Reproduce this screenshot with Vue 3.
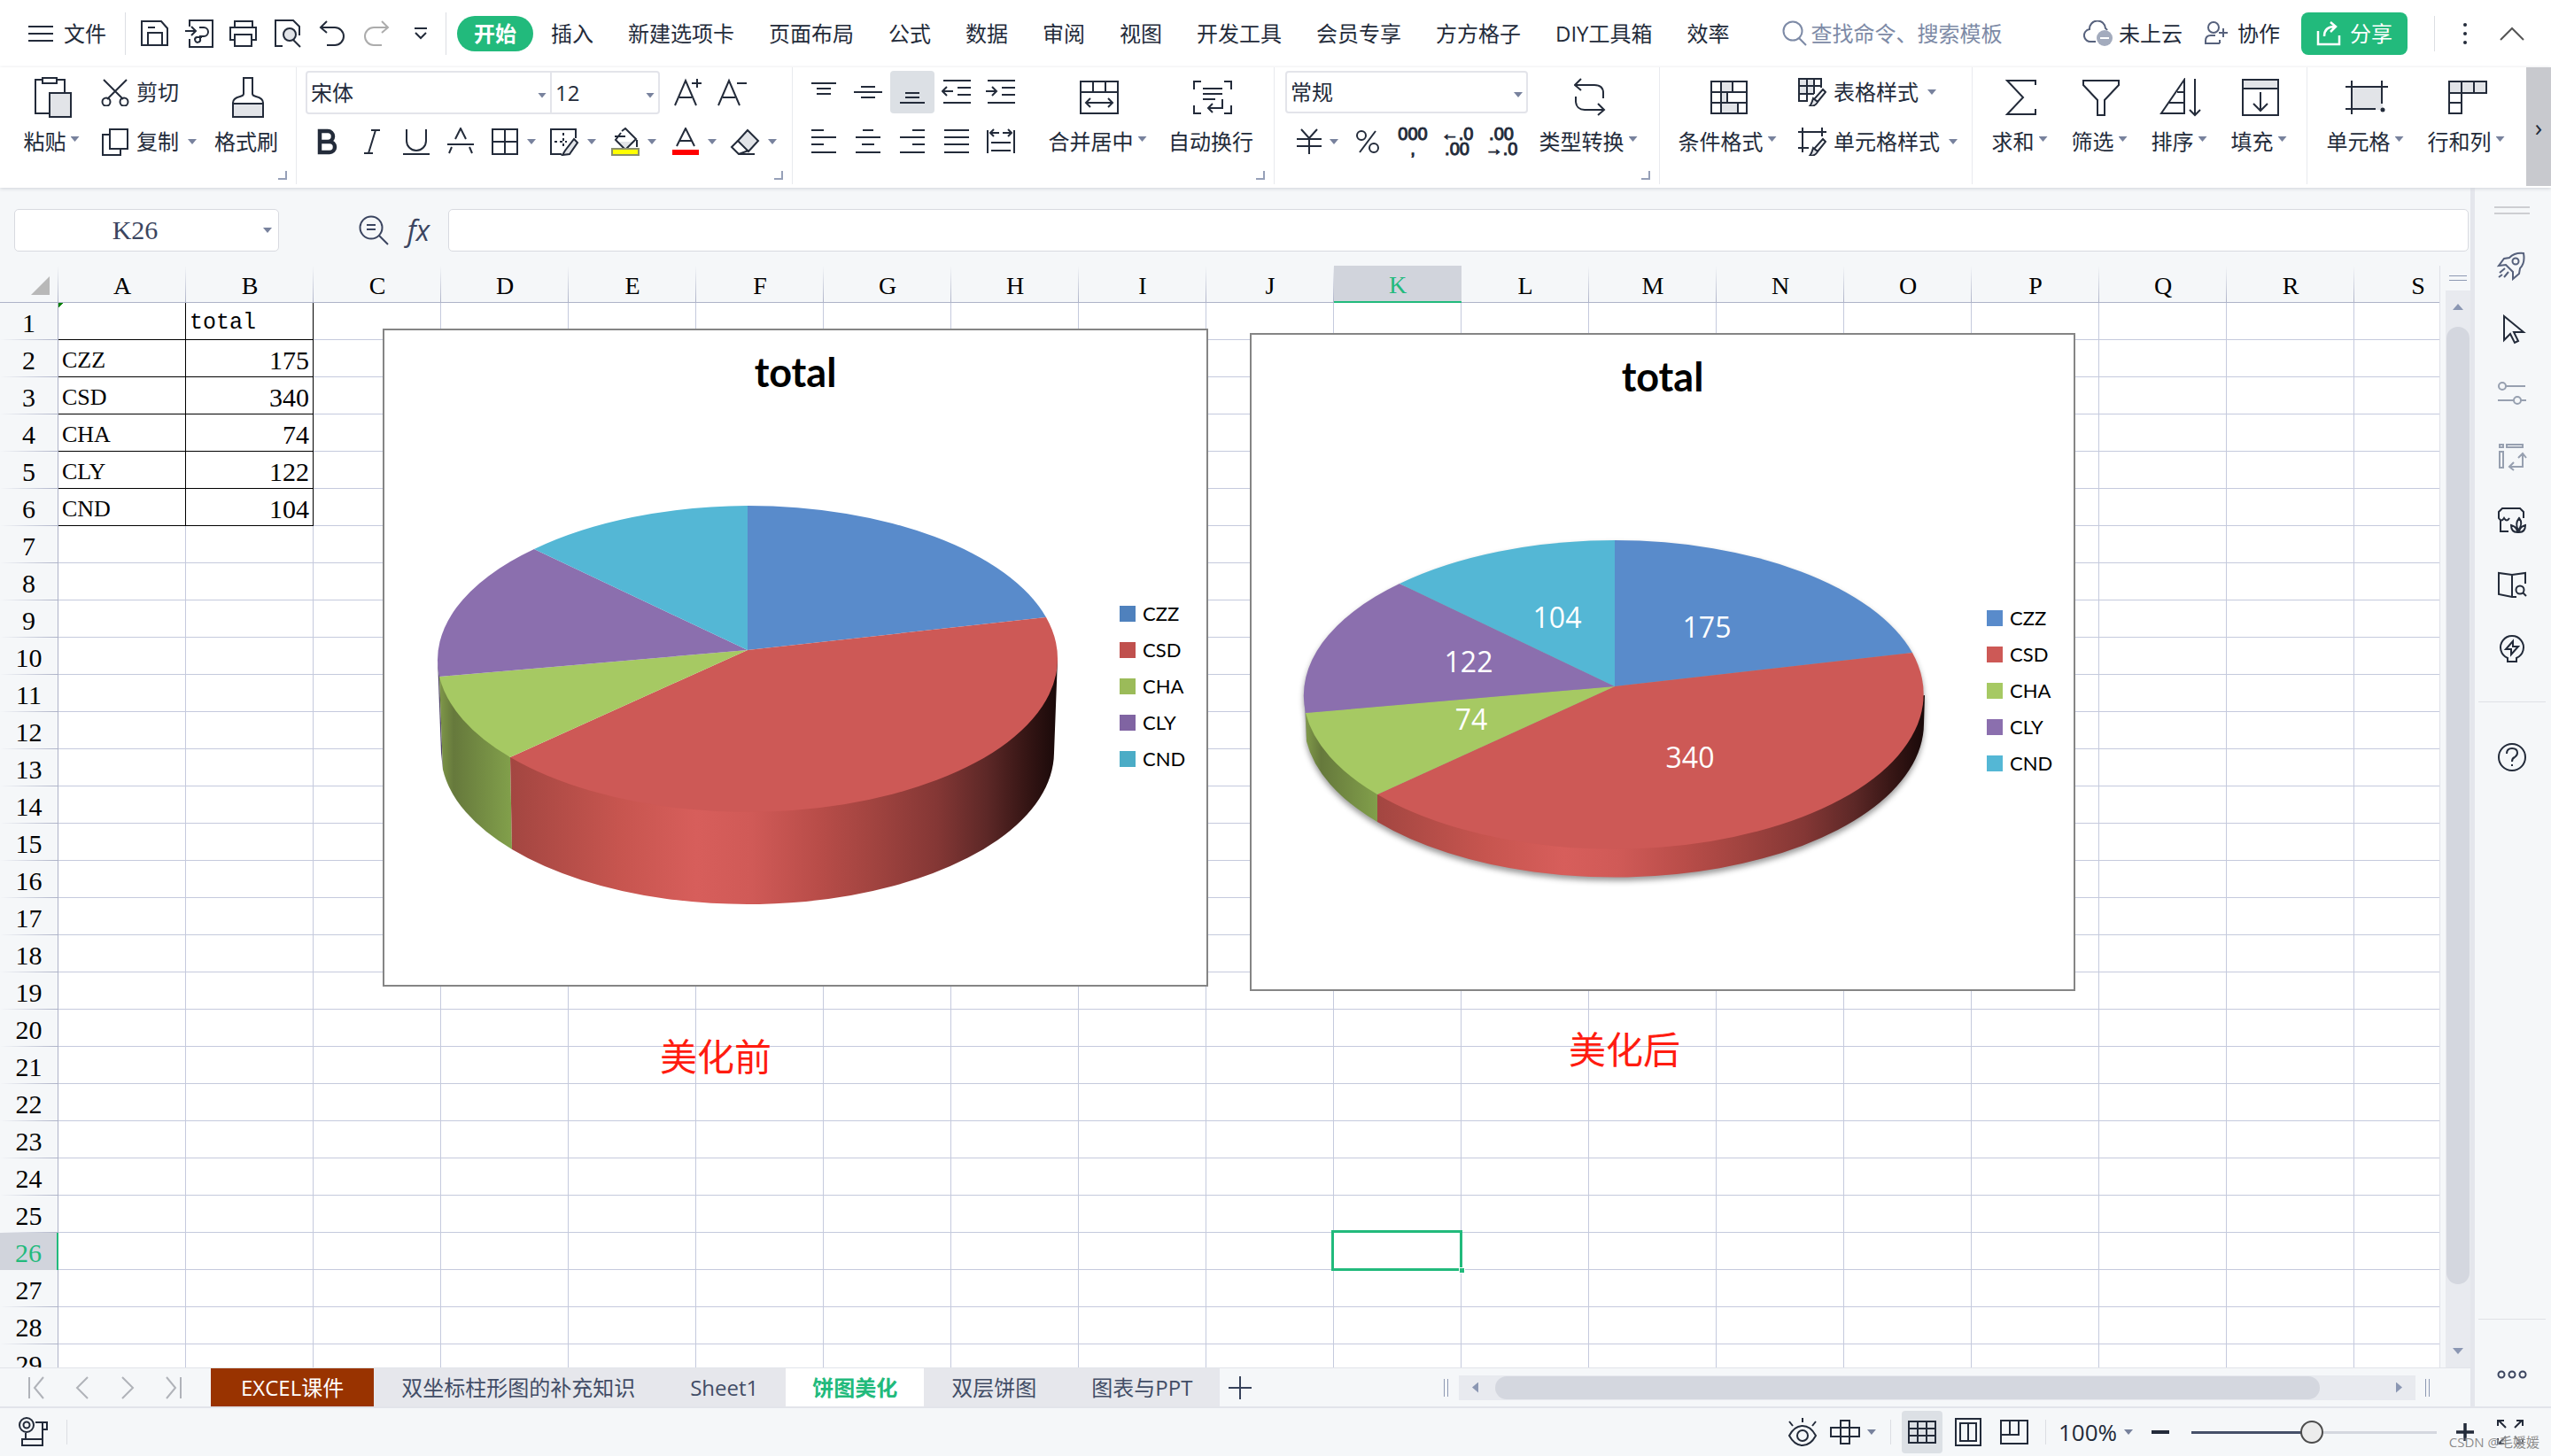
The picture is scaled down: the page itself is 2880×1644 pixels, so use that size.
<script setup>
import { h } from 'vue'

const G = 'fill="#e2e4e8"'

// name: [width, height, markup]
const icons = {
  menu: [28, 20, '<path d="M0 2h28M0 10h28M0 18h28"/>'],
  save: [32, 30, '<path d="M1 1h22l7 8v19H1z"/><path d="M8 28V14h16v14M8 8h8"/>'],
  exportPdf: [32, 32, '<path d="M5 8V1h26v30H5v-9"/><path d="M0 13h11M7 8l5 5-5 5"/><path d="M16 9h5a5 5 0 0 1 0 10h-4v3a3 3 0 1 1-4-2h6"/>'],
  print: [32, 30, '<path d="M6 8V1h20v7"/><path d="M5 22H1V8h29v14h-4"/><path d="M6 16h19v13H6z"/>'],
  preview: [30, 32, `<path d="M9 30H1V1h20l7 7v10"/><circle cx="17" cy="17" r="7" ${G}/><path d="M21 23l8 8"/>`],
  undo: [30, 30, '<path d="M9 1L2 8l7 6"/><path d="M2 8h16a10 10 0 0 1 0 20H9"/>'],
  redo: [30, 30, '<path d="M21 1l7 7-7 6"/><path d="M28 8H12a10 10 0 0 0 0 20h9"/>'],
  more: [16, 16, '<path d="M1 2h14"/><path d="M2 7l6 6 6-6"/>'],
  search: [30, 30, '<circle cx="12" cy="12" r="10.500"/><path d="M19 20l8 8"/>'],
  cloud: [34, 30, '<path d="M14 24H9a7 7 0 0 1-2-14 9 9 0 0 1 18-1 7 7 0 0 1 2 2"/><circle cx="24" cy="20" r="9" fill="#a3abbd" stroke="none"/><path d="M19 20h10" stroke="#fff"/>'],
  user: [28, 28, '<circle cx="11" cy="7" r="6"/><path d="M18 25H2v-3q0-6 6-6h5M22 8v10M17 13h10M18 25v-4"/>'],
  share: [28, 28, '<path d="M2 11v15h24V16" stroke-width="2.500"/><path d="M9 17q0-11 12-11M16 1l6 5-6 6" stroke-width="2.500"/>'],
  dots: [6, 26, '<g fill="currentColor" stroke="none"><circle cx="3" cy="3" r="2"/><circle cx="3" cy="13" r="2"/><circle cx="3" cy="23" r="2"/></g>'],
  up: [28, 16, '<path d="M1 15L14 2l13 13"/>'],
  paste: [44, 48, `<path d="M10 4H2v38h17M27 4h8v14"/><path d="M10 2h16v6H10z"/><path d="M18 19h24v27H18z" ${G}/>`],
  cut: [32, 32, '<path d="M3 2l22 22M29 2L7 24"/><circle cx="6" cy="27" r="4.500"/><circle cx="26" cy="27" r="4.500"/>'],
  copy: [32, 32, '<path d="M10 2h20v22H10z"/><path d="M9 8H2v23h20v-6"/>'],
  brush: [38, 48, `<path d="M14 2h10v18q0 2 4 3 8 2 8 7v16H2V30q0-5 8-7 4-1 4-3z"/><path d="M2 31h34v15H2z" ${G}/>`],
  bigA: [32, 32, '<path d="M1 31L13 3l12 28M6 22h14M20 6h11M26 1v10"/>'],
  smallA: [34, 32, '<path d="M1 31L13 3l12 28M6 22h14M22 6h11"/>'],
  bold: [24, 30, '<path d="M3 3h9a6 6 0 0 1 0 12H3zM3 15h11a6 6 0 0 1 0 12H3z" stroke-width="4.500"/>'],
  italic: [20, 30, '<path d="M9 2h10M1 28h10M14 2L6 28"/>'],
  underline: [32, 32, '<path d="M5 2v13a11 11 0 0 0 22 0V2M1 30h30"/>'],
  strike: [32, 32, '<path d="M10 13l6-12 6 12M1 19h30M6 22L3 29M26 22l3 7"/>'],
  borders: [32, 32, '<path d="M2 2h28v28H2zM16 2v28M2 16h28"/>'],
  drawBorder: [34, 32, `<path d="M30 8V2H2v28h12M30 8v4"/><path d="M16 6v16M6 16h14" stroke-dasharray="3 3"/><path d="M28 13l4 4-9 13-8 1 3-5z" ${G}/>`],
  fill: [32, 32, `<path d="M5 16h22l-11 9z" ${G} stroke="none"/><path d="M12 4l4-3 12 12-12 12L5 14l6-8M4 10h12M29 14v8"/><path d="M1 24h30v7H1z" fill="#ff0" stroke="#8a8f6a"/>`],
  fontColor: [32, 32, '<path d="M6 21L16 1l10 20M9 15h14"/><path d="M1 25h30v6H1z" fill="#f00" stroke="none"/>'],
  eraser: [34, 32, `<path d="M20 3l12 12-11 12L9 15z" ${G}/><path d="M9 15l-7 7 8 8h18M10 30l11-4"/>`],
  alTop: [30, 32, '<path d="M1 6h28M7 12h16M7 18h16"/>'],
  alMid: [32, 32, '<path d="M8 10h16M0 16h32M8 22h16"/>'],
  alBot: [30, 32, '<path d="M7 17h16M7 22h16M1 28h28"/>'],
  indL: [34, 32, '<path d="M2 3h31M18 11h15M18 19h15M2 28h31M1 15h12M6 10l-5 5 5 5"/>'],
  indR: [34, 32, '<path d="M2 3h31M18 11h15M18 19h15M2 28h31M0 15h12M7 10l5 5-5 5"/>'],
  tL: [30, 30, '<path d="M1 2h14M1 10h28M1 18h14M1 27h28"/>'],
  tC: [30, 30, '<path d="M9 2h12M1 10h28M8 18h14M1 27h28"/>'],
  tR: [30, 30, '<path d="M15 2h14M1 10h28M15 18h14M1 27h28"/>'],
  tJ: [30, 30, '<path d="M1 2h28M1 10h28M1 18h28M1 27h28"/>'],
  tD: [34, 30, '<path d="M2 2v26M32 2v26M6 16h22M6 25h22M5 5h10M19 5h10M9 1L5 5l4 4M25 1l4 4-4 4"/>'],
  merge: [46, 40, '<path d="M2 2h42v36H2zM2 14h42M16 2v12M30 2v12M8 26h30M13 21l-5 5 5 5M33 21l5 5-5 5"/>'],
  wrap: [46, 40, '<path d="M10 2H2v9M36 2h8v9M10 38H2v-9M36 38h8v-9M12 10h22M12 16h22M12 22h14M34 22v10H18M23 27l-5 5 5 5"/>'],
  yen: [28, 30, '<path d="M5 1l9 10 9-10M14 11v18M0 12h28M0 20h28"/>'],
  percent: [26, 30, '<circle cx="6" cy="8" r="5"/><circle cx="20" cy="22" r="5"/><path d="M22 3L4 27"/>'],
  convert: [36, 44, '<path d="M8 1L1 8l7 6M1 8h22q10 0 10 9v6"/><path d="M27 29l7 7-7 6M34 36H12q-9 0-10-9v-6"/>'],
  condFmt: [44, 40, `<path d="M13 2h13v12H13zM13 14h7v12h-7zM13 26h19v12H13z" ${G} stroke="none"/><path d="M2 2h40v36H2zM2 14h40M2 26h40M13 2v36M26 2v12M20 14v12M32 26v12"/>`],
  tblStyle: [32, 32, `<path d="M1 1h17v17H1z" ${G} stroke="none"/><path d="M18 18H10v8H1V1h25v10M1 9h25M1 18h17M10 1v17M18 1v17"/><path d="M28 13l3 3-9 11-4-3z" fill="#fff"/><path d="M17 23l5 4q-2 5-9 5 2-2 4-9z" ${G}/>`],
  cellStyle: [32, 32, `<path d="M5 0v28M0 5h32M27 0v10M0 23h12"/><path d="M28 13l3 3-9 11-4-3z" fill="#fff"/><path d="M17 23l5 4q-2 5-9 5 2-2 4-9z" ${G}/>`],
  sum: [38, 44, '<path d="M35 8V3H3l18 19L3 41h32v-6"/>'],
  filter: [44, 44, '<path d="M2 3h40v5L26 25v17h-8V25L2 8z"/>'],
  sort: [48, 44, '<path d="M28 2v38H2zM20 16h8M11 28h17M40 1v41M34 36l6 6 6-6"/>'],
  fillDown: [44, 44, `<path d="M2 2h40v10H2z" ${G}/><path d="M2 2h40v40H2zM22 16v20M14 29l8 8 8-8"/>`],
  cell: [48, 40, `<path d="M8 8h34v26H8z" ${G} stroke="none"/><path d="M7 1v38M0 8h48M41 1v26M0 33h34"/><circle cx="42" cy="34" r="2.500" fill="currentColor" stroke="none"/>`],
  rowCol: [46, 40, `<path d="M2 2h42v13H2z" ${G}/><path d="M2 2v36h14V2M30 2v13M2 26h14"/>`],
  zoomF: [34, 34, '<circle cx="14" cy="14" r="12.500"/><path d="M23 23l10 10M9 11h10M9 16h10"/>'],
  rocket: [34, 34, '<path d="M30 3q-10-1-16 5L8 9l-6 8 8-1 8 8v8l7-6 1-6q6-6 4-17z"/><circle cx="21" cy="12" r="3.500"/><path d="M9 20l-6 5M13 24l-5 6M6 27l-4 3"/>'],
  pointer: [34, 34, '<path d="M8 2v27l7-7 5 10 4-2-5-10h11z"/>'],
  sliders: [34, 34, '<circle cx="6" cy="9" r="4"/><path d="M10 9h22M1 25h18M27 25h6"/><circle cx="23" cy="25" r="4"/>'],
  pivot: [34, 34, '<path d="M3 3h4v3H3zM11 3h18v3H11zM3 11h4v18H3zM29 14v14H15M24 18l5-5 4 5M19 23l-5 5 5 4"/>'],
  shop: [34, 34, '<path d="M30 14V7l-4-4H6L2 7v7q3 5 6 0 3 5 6 0M4 17v12h9"/><path d="M24 28q-4-8 1-14 5 6-1 14zM23 30q-7 0-7-8 7 2 7 8zM25 30q7 0 7-8-7 2-7 8z"/>'],
  book: [34, 34, '<path d="M17 6L2 4v24l15 3h5M17 6v25M17 6l15-2v12"/><circle cx="26" cy="23" r="4.500"/><path d="M29 26l4 4"/>'],
  bulb: [34, 34, '<path d="M12 32v-4a13 13 0 1 1 10 0v4z"/><path d="M18 9l-8 9h6v6l8-9h-6z"/>'],
  help: [34, 34, '<circle cx="17" cy="17" r="15"/><path d="M11 13q0-6 6-6t6 5q0 3-3 5-3 1-3 5M17 25v2"/>'],
  ooo: [34, 12, '<circle cx="5" cy="6" r="3.500"/><circle cx="17" cy="6" r="3.500"/><circle cx="29" cy="6" r="3.500"/>'],
  first: [20, 26, '<path d="M1 1v24M17 1L7 13l10 12"/>'],
  prev: [20, 26, '<path d="M16 1L4 13l12 12"/>'],
  next: [20, 26, '<path d="M4 1l12 12L4 25"/>'],
  last: [20, 26, '<path d="M19 1v24M3 1l10 12L3 25"/>'],
  plus: [28, 28, '<path d="M14 1v26M1 14h26"/>'],
  macro: [34, 34, '<circle cx="9" cy="9" r="8"/><circle cx="9" cy="9" r="3.500"/><path d="M19 6h13v8h-5v18H4v-7h22M27 6v8M8 18v7M4 32h20"/>'],
  eye: [34, 32, '<path d="M2 20q6-11 15-11t15 11q-6 11-15 11T2 20z"/><circle cx="17" cy="20" r="6"/><path d="M17 0v5M2 4l4 5M32 4l-4 5"/>'],
  cross: [34, 30, '<path d="M12 2h10v26H12zM1 10h32v10H1z"/>'],
  gridView: [34, 28, '<path d="M2 2h30v24H2zM2 10h30M2 18h30M12 2v24M22 2v24"/>'],
  pageView: [32, 32, '<path d="M2 1h28v30H2zM7 6h18v20H7zM16 6v20"/>'],
  layoutView: [34, 30, '<path d="M2 2h30v26H2zM2 18h20V2M12 2v16"/>'],
  minus: [22, 22, '<path d="M1 11h20" stroke-width="4"/>'],
  zoomPlus: [22, 22, '<path d="M1 11h20M11 1v20" stroke-width="3.500"/>'],
  full: [30, 30, '<path d="M1 8V2h7M2 2l8 8M22 2h7v6M28 2l-8 8M1 22v6h7M2 28l8-8M22 28h7v-6M28 28l-8-8"/>']
}

const Ico = (props) => {
  const [w, ht, body] = icons[props.n]
  return h('svg', {
    class: 'ico', width: w, height: ht, viewBox: `0 0 ${w} ${ht}`,
    fill: 'none', stroke: 'currentColor', 'stroke-width': 2, 'aria-hidden': 'true', innerHTML: body
  })
}
Ico.props = ['n']

const quick = [
  ['save', '保存'], ['exportPdf', '输出为PDF'], ['print', '打印'], ['preview', '打印预览'],
  ['undo', '撤消'], ['redo', '恢复'], ['more', '更多']
]
const menus = ['开始', '插入', '新建选项卡', '页面布局', '公式', '数据', '审阅', '视图', '开发工具', '会员专享', '方方格子', 'DIY工具箱', '效率']
const fontTools = [['bold', 0], ['italic', 0], ['underline', 0], ['strike', 0], ['borders', 1], ['drawBorder', 1], ['fill', 1], ['fontColor', 1], ['eraser', 1]]
const editTools = [['sum', '求和'], ['filter', '筛选'], ['sort', '排序'], ['fillDown', '填充']]
const cellTools = [['cell', '单元格'], ['rowCol', '行和列']]

const cols = 'ABCDEFGHIJKLMNOPQRS'.split('')
const data = {
  B1: 'total', A2: 'CZZ', B2: 175, A3: 'CSD', B3: 340, A4: 'CHA', B4: 74, A5: 'CLY', B5: 122, A6: 'CND', B6: 104
}
const cellClass = (c, r) => ({
  boxed: (c === 'A' || c === 'B') && r < 7,
  num: typeof data[c + r] === 'number',
  mono: c + r === 'B1',
  flag: c + r === 'A1',
  active: c === 'K' && r === 26
})

const palette = ['#598bcb', '#cd5956', '#a6c963', '#8b6fae', '#54b7d5']
const names = ['CZZ', 'CSD', 'CHA', 'CLY', 'CND']

function buildChart(o) {
  const top = [412, o.cy - o.ry]
  const pts = [top, ...o.edges, top]
  const slices = palette.map((fill, i) => ({
    fill,
    d: `M412 ${o.mid}L${pts[i]}A350 ${o.ry} 0 0 1 ${pts[i + 1]}Z`
  }))
  const [, p2, p3] = o.edges
  const [b2, b3] = o.base
  const arc = `A${o.brx} ${o.bry} 0 0 0`
  return {
    ...o,
    slices,
    red: `M${p2}L${b2}${arc} ${412 + o.brx} ${o.bcy}L762 ${o.cy}Z`,
    green: `M${p3}L${b3}${arc} ${b2}L${p2}Z`,
    purple: `M62 ${o.cy}L${412 - o.brx} ${o.bcy}L${b3}L${p3}Z`
  }
}

const charts = [
  buildChart({
    id: 'before', mid: 363, cy: 373, ry: 173, brx: 346, bcy: 479, bry: 172,
    edges: [[749, 326], [144, 484], [64, 393], [171, 249]], base: [[146, 588], [68, 498]],
    legendY: 313, swatches: ['#4f81bd', '#c0504d', '#9bbb59', '#8064a2', '#4bacc6'], labels: []
  }),
  buildChart({
    id: 'after', mid: 399, cy: 409, ry: 175, brx: 349, bcy: 441, bry: 174,
    edges: [[748, 361], [144, 521], [63, 429], [169, 283]], base: [[144, 552], [64, 461]],
    legendY: 313, swatches: palette,
    labels: [['175', 516, 333], ['340', 497, 480], ['74', 250, 437], ['122', 247, 372], ['104', 347, 322]]
  })
]

const sheets = [['EXCEL课件', 'brown'], ['双坐标柱形图的补充知识', ''], ['Sheet1', ''], ['饼图美化', 'on'], ['双层饼图', ''], ['图表与PPT', '']]
const side = [['rocket', '稻壳', 'blue'], ['pointer', '选择', ''], ['sliders', '属性', 'dim'], ['pivot', '透视表', 'dim'], ['shop', '素材', ''], ['book', '帮助手册', ''], ['bulb', '技巧', '']]
</script>

<template>
  <div class="app">
    <header class="menubar">
      <button class="file"><Ico n="menu" />文件</button>
      <div class="quick">
        <button v-for="q in quick" :key="q[0]" class="tool" :class="{ faded: q[0] === 'redo' }" :aria-label="q[1]"><Ico :n="q[0]" /></button>
      </div>
      <nav class="menus">
        <button v-for="(m, i) in menus" :key="m" :class="{ current: i === 0 }">{{ m }}</button>
      </nav>
      <label class="search"><Ico n="search" /><input type="text" placeholder="查找命令、搜索模板" aria-label="查找命令"></label>
      <div class="account">
        <button class="cloud"><Ico n="cloud" />未上云</button>
        <button class="coop"><Ico n="user" />协作</button>
        <button class="share"><Ico n="share" />分享</button>
        <i class="bar"></i>
        <button class="plain" aria-label="更多选项"><Ico n="dots" /></button>
        <button class="plain fold" aria-label="收起功能区"><Ico n="up" /></button>
      </div>
    </header>

    <section class="ribbon">
      <div class="group clip">
        <button class="big w76"><span class="pic"><Ico n="paste" /></span><span class="lab">粘贴<i class="caret"></i></span></button>
        <div class="rows">
          <button class="line"><Ico n="cut" />剪切</button>
          <button class="line"><Ico n="copy" />复制<i class="caret low"></i></button>
        </div>
        <button class="big w84"><span class="pic"><Ico n="brush" /></span><span class="lab">格式刷</span></button>
        <i class="corner"></i>
      </div>

      <div class="group font">
        <div class="rows">
          <div class="row">
            <div class="fontbox">
              <span class="pick name"><select aria-label="字体"><option>宋体</option></select><i class="caret"></i></span>
              <span class="pick size"><select aria-label="字号"><option>12</option></select><i class="caret"></i></span>
            </div>
            <button class="tool" aria-label="增大字号"><Ico n="bigA" /></button>
            <button class="tool" aria-label="减小字号"><Ico n="smallA" /></button>
          </div>
          <div class="row">
            <button v-for="t in fontTools" :key="t[0]" class="tool" :class="{ drop: t[1] }" :aria-label="t[0]"><Ico :n="t[0]" /><i v-if="t[1]" class="caret"></i></button>
          </div>
        </div>
        <i class="corner"></i>
      </div>

      <div class="group align">
        <div class="rows">
          <div class="row">
            <button v-for="t in ['alTop', 'alMid', 'alBot', 'indL', 'indR']" :key="t" class="tool" :class="{ pressed: t === 'alBot' }" :aria-label="t"><Ico :n="t" /></button>
          </div>
          <div class="row">
            <button v-for="t in ['tL', 'tC', 'tR', 'tJ', 'tD']" :key="t" class="tool" :aria-label="t"><Ico :n="t" /></button>
          </div>
        </div>
        <button class="big w128 after"><span class="pic"><Ico n="merge" /></span><span class="lab">合并居中<i class="caret"></i></span></button>
        <button class="big w128"><span class="pic"><Ico n="wrap" /></span><span class="lab">自动换行</span></button>
        <i class="corner"></i>
      </div>

      <div class="group number">
        <div class="rows">
          <div class="row">
            <span class="pick format"><select aria-label="数字格式"><option>常规</option></select><i class="caret"></i></span>
          </div>
          <div class="row">
            <button class="tool drop" aria-label="货币"><Ico n="yen" /><i class="caret"></i></button>
            <button class="tool" aria-label="百分比"><Ico n="percent" /></button>
            <button class="tool digits"><span>000</span><span>,</span></button>
            <button class="tool digits"><span>←.0</span><span>.00</span></button>
            <button class="tool digits"><span>.00</span><span>→.0</span></button>
          </div>
        </div>
        <button class="big w128"><span class="pic"><Ico n="convert" /></span><span class="lab">类型转换<i class="caret"></i></span></button>
        <i class="corner"></i>
      </div>

      <div class="group styles">
        <button class="big w128"><span class="pic"><Ico n="condFmt" /></span><span class="lab">条件格式<i class="caret"></i></span></button>
        <div class="rows">
          <button class="line"><Ico n="tblStyle" />表格样式<i class="caret low"></i></button>
          <button class="line"><Ico n="cellStyle" />单元格样式<i class="caret low"></i></button>
        </div>
      </div>

      <div class="group edit">
        <button v-for="t in editTools" :key="t[0]" class="big w90"><span class="pic"><Ico :n="t[0]" /></span><span class="lab">{{ t[1] }}<i class="caret"></i></span></button>
      </div>

      <div class="group cells">
        <button v-for="t in cellTools" :key="t[0]" class="big w114"><span class="pic"><Ico :n="t[0]" /></span><span class="lab">{{ t[1] }}<i class="caret"></i></span></button>
      </div>
      <button class="slide" aria-label="向右滚动">›</button>
    </section>

    <div class="body">
      <main class="main">
        <div class="formula">
          <div class="namebox"><input type="text" value="K26" aria-label="名称框"><i class="caret"></i></div>
          <button class="plain" aria-label="查找公式"><Ico n="zoomF" /></button>
          <button class="plain fx">fx</button>
          <input class="expr" type="text" aria-label="编辑栏">
        </div>

        <div class="work">
          <div class="sheet">
            <table>
              <thead>
                <tr>
                  <th class="all"><i></i></th>
                  <th v-for="c in cols" :key="c" :class="{ sel: c === 'K' }">{{ c }}</th>
                </tr>
              </thead>
              <tbody>
                <tr v-for="r in 29" :key="r">
                  <th :class="{ sel: r === 26 }">{{ r }}</th>
                  <td v-for="c in cols" :key="c" :class="cellClass(c, r)">{{ data[c + r] }}</td>
                </tr>
              </tbody>
            </table>

            <svg v-for="c in charts" :key="c.id" class="chart" :class="c.id" width="932" height="743" viewBox="0 0 932 743">
              <defs>
                <linearGradient :id="c.id + 'r'" gradientUnits="userSpaceOnUse" x1="144" x2="762" y1="0" y2="0">
                  <stop offset="0" stop-color="#a34641" /><stop offset=".2" stop-color="#c7554f" />
                  <stop offset=".34" stop-color="#d75e5b" /><stop offset=".44" stop-color="#d05a57" />
                  <stop offset=".56" stop-color="#b94d49" /><stop offset=".66" stop-color="#a24440" />
                  <stop offset=".78" stop-color="#843735" /><stop offset=".87" stop-color="#5d2827" />
                  <stop offset=".94" stop-color="#371615" /><stop offset="1" stop-color="#190909" />
                </linearGradient>
                <linearGradient :id="c.id + 'g'" gradientUnits="userSpaceOnUse" x1="64" x2="146" y1="0" y2="0">
                  <stop offset="0" stop-color="#7f9849" /><stop offset=".2" stop-color="#66793c" />
                  <stop offset="1" stop-color="#82a04b" />
                </linearGradient>
              </defs>
              <rect x="1" y="1" width="930" height="741" fill="#fff" stroke="#858585" stroke-width="2" />
              <text class="ttl" x="466" y="66" text-anchor="middle">total</text>
              <g :class="{ shaded: c.id === 'after' }">
                <path :d="c.purple" fill="#4f4468" />
                <path :d="c.green" :fill="`url(#${c.id}g)`" />
                <path :d="c.red" :fill="`url(#${c.id}r)`" />
                <path v-for="s in c.slices" :key="s.fill" :d="s.d" :fill="s.fill" />
              </g>
              <text v-for="l in c.labels" :key="l[0]" class="val" :x="l[1]" :y="l[2] + 11" text-anchor="middle">{{ l[0] }}</text>
              <g v-for="(n, i) in names" :key="n">
                <rect x="832" :y="c.legendY + i * 41" width="18" height="18" :fill="c.swatches[i]" />
                <text class="leg" x="858" :y="c.legendY + i * 41 + 17">{{ n }}</text>
              </g>
            </svg>
            <p class="note first">美化前</p>
            <p class="note second">美化后</p>
          </div>
          <div class="vside">
            <i class="split"></i>
            <div class="vscroll"><i class="arr up"></i><i class="thumb"></i><i class="arr down"></i></div>
          </div>
        </div>

        <div class="tabs">
          <div class="pager">
            <button v-for="p in ['first', 'prev', 'next', 'last']" :key="p" class="plain" :aria-label="p"><Ico :n="p" /></button>
          </div>
          <button v-for="s in sheets" :key="s[0]" class="tab" :class="s[1]">{{ s[0] }}</button>
          <button class="plain add" aria-label="新建工作表"><Ico n="plus" /></button>
          <i class="grip left"></i>
          <div class="hscroll"><i class="arr lt"></i><i class="thumb"></i><i class="arr rt"></i></div>
          <i class="grip right"></i>
        </div>
      </main>

      <aside class="side">
        <i class="handle"></i>
        <button v-for="s in side" :key="s[0]" class="plain" :class="s[2]" :aria-label="s[1]"><Ico :n="s[0]" /></button>
        <i class="rule"></i>
        <button class="plain help" aria-label="帮助"><Ico n="help" /></button>
        <i class="rule last"></i>
        <button class="plain dotsbtn" aria-label="更多"><Ico n="ooo" /></button>
      </aside>
    </div>

    <footer class="status">
      <button class="plain macro" aria-label="录制宏"><Ico n="macro" /></button>
      <i class="bar"></i>
      <div class="views">
        <button class="plain" aria-label="护眼模式"><Ico n="eye" /></button>
        <button class="plain cross" aria-label="阅读模式"><Ico n="cross" /><i class="caret"></i></button>
        <i class="bar"></i>
        <div class="modes">
          <button class="plain pressed" aria-label="普通视图"><Ico n="gridView" /></button>
          <button class="plain" aria-label="分页预览"><Ico n="pageView" /></button>
          <button class="plain" aria-label="页面布局"><Ico n="layoutView" /></button>
        </div>
        <i class="bar"></i>
        <button class="plain pct">100%<i class="caret"></i></button>
        <button class="plain" aria-label="缩小"><Ico n="minus" /></button>
        <input class="zoom" type="range" min="0" max="100" value="49" aria-label="缩放">
        <button class="plain" aria-label="放大"><Ico n="zoomPlus" /></button>
        <button class="plain" aria-label="全屏"><Ico n="full" /></button>
      </div>
      <span class="mark">CSDN @毛媛媛</span>
    </footer>
  </div>
</template>

<style>
body { margin: 0; }
</style>

<style scoped>
.app, .app * { box-sizing: border-box; }
.app {
  display: flex; flex-direction: column; height: 100vh; overflow: hidden;
  background: #f5f7f9; color: #232b3a;
  font: 24px/32px "Open Sans", "Noto Sans CJK SC", sans-serif;
}
button, input, select { font: inherit; color: inherit; border: 0; background: none; padding: 0; margin: 0; outline: 0; }
button { display: flex; align-items: center; justify-content: center; white-space: nowrap; flex: none; }
i { font-style: normal; flex: none; }
.ico { display: block; flex: none; }
.caret { display: block; width: 10px; height: 6px; background: #78829d; clip-path: polygon(0 0, 100% 0, 50% 100%); }
.bar { width: 1px; background: #dcdee3; }
.tool { width: 50px; height: 48px; }
.tool.drop { width: 68px; padding-right: 8px; justify-content: flex-end; }
.tool.drop .ico { margin-right: 9px; }
.tool.faded { color: #acacac; }
.pressed { background: #dce0e5; border-radius: 4px; }

/* menu bar */
.menubar { display: flex; align-items: center; height: 76px; flex: none; background: #fff; }
.file { width: 142px; height: 48px; padding-left: 32px; justify-content: flex-start; gap: 12px; border-right: 1px solid #dcdee3; }
.quick { display: flex; width: 362px; height: 48px; padding-left: 8px; border-right: 1px solid #dcdee3; }
.menus { display: flex; gap: 1px; padding-left: 12px; }
.menus button { height: 40px; padding: 0 19px; }
.menus .current { background: #22ba7c; color: #fff; font-weight: 700; border-radius: 20px; }
.search { display: flex; align-items: center; gap: 3px; flex: 1; padding-left: 40px; color: #7d8aa6; }
.search input { width: 240px; }
.search input::placeholder { color: #7d8aa6; opacity: 1; }
.account { display: flex; align-items: center; padding-right: 30px; }
.cloud { gap: 6px; margin-right: 24px; }
.cloud .ico, .coop .ico { color: #56617c; }
.coop { gap: 10px; margin-right: 24px; }
.share { width: 120px; height: 48px; gap: 10px; background: #22ba7c; color: #fff; border-radius: 8px; margin-right: 30px; }
.account .bar { height: 40px; margin-right: 31px; }
.fold { margin-left: 36px; color: #555; }

/* ribbon */
.ribbon { display: flex; height: 136px; flex: none; background: #fff; position: relative; z-index: 1; box-shadow: 0 1px 4px #cfd2d8; }
.group { display: flex; position: relative; flex: none; height: 132px; border-right: 1px solid #e8eaee; }
.clip { width: 335px; padding-left: 20px; gap: 18px; }
.font { width: 560px; padding-left: 10px; }
.align { width: 544px; padding-left: 10px; }
.number { width: 435px; padding-left: 12px; }
.styles { width: 353px; padding-left: 12px; gap: 16px; }
.edit { width: 378px; padding-left: 8px; }
.cells { flex: 1; padding-left: 8px; border-right: 0; }
.rows { display: flex; flex-direction: column; gap: 8px; padding-top: 4px; }
.clip .rows { width: 104px; }
.number .rows { width: 278px; }
.row { display: flex; height: 48px; }
.line { height: 48px; gap: 8px; justify-content: flex-start; }
.line .low { margin-left: 2px; }
.big { flex-direction: column; justify-content: flex-start; padding-top: 10px; height: 112px; }
.pic { display: flex; align-items: center; height: 48px; padding-left: 3px; }
.lab { display: flex; gap: 5px; margin-top: 10px; height: 32px; }
.lab .caret { margin-top: 10px; }
.w76 { width: 76px; }
.w84 { width: 84px; }
.w90 { width: 90px; }
.w114 { width: 114px; }
.w128 { width: 128px; }
.after { margin-left: 20px; }
.corner { position: absolute; right: 10px; bottom: 5px; width: 10px; height: 10px; border: solid #96a0b8; border-width: 0 2px 2px 0; }
.fontbox { display: flex; width: 400px; height: 49px; margin-right: 7px; border: 2px solid #e3e4ea; border-radius: 4px; }
.pick { position: relative; display: flex; }
.pick select { appearance: none; width: 100%; padding-left: 4px; }
.pick .caret { position: absolute; right: 4px; top: 50%; }
.name { width: 276px; border-right: 2px solid #e3e4ea; }
.size { flex: 1; }
.format { width: 274px; border: 2px solid #e3e4ea; border-radius: 4px; }
.digits { flex-direction: column; padding-left: 2px; font: 20px/17px "Liberation Sans", sans-serif; }
.digits span { display: block; height: 17px; -webkit-text-stroke: 1px currentColor; }
.slide { width: 28px; height: 134px; background: #c8c9ce; font-size: 28px; }

/* formula bar */
.body { display: flex; flex: 1; min-height: 0; }
.main { display: flex; flex-direction: column; flex: 1; min-width: 0; }
.formula { display: flex; align-items: center; height: 88px; flex: none; padding: 8px 2px 0 16px; color: #3b4560; }
.namebox { display: flex; align-items: center; width: 299px; height: 48px; margin-right: 90px; padding: 0 7px 0 1px; background: #fff; border: 1px solid #d8dae0; border-radius: 5px; }
.namebox input { flex: 1; min-width: 0; padding-right: 10px; text-align: center; font: 30px/32px "Liberation Serif", serif; }
.fx { width: 67px; font: italic 32px/32px "Open Sans", sans-serif; }
.expr { flex: 1; height: 48px; background: #fff; border: 1px solid #d8dae0; border-radius: 5px; }

/* sheet */
.work { display: flex; flex: 1; min-height: 0; }
.sheet { position: relative; flex: 1; min-width: 0; overflow: hidden; border-right: 1px solid #dfe1e8; }
table { table-layout: fixed; width: 2802px; border-collapse: separate; border-spacing: 0; background: #fff; color: #000; font: 28px/36px "Liberation Serif", serif; }
th { width: 144px; height: 42px; padding: 4px 0 0; font-weight: 400; background: #f5f7f9; border-bottom: 1px solid #aeb3c8; }
thead th { background: linear-gradient(#f5f7f9, #aeb3c8) right / 1px 100% no-repeat #f5f7f9; }
.all { width: 66px; }
.all i { display: block; width: 21px; height: 21px; margin-left: 35px; background: #b8b8b8; clip-path: polygon(100% 0, 100% 100%, 0 100%); }
tbody th { font-size: 30px; border-bottom: 0; border-right: 1px solid #aeb3c8; background: linear-gradient(90deg, #f5f7f9, #aeb3c8) bottom / 100% 1px no-repeat #f5f7f9; }
thead .sel { background: #d1d4dc; color: #22ba7c; border-bottom: 2px solid #22ba7c; }
tbody .sel { background: #d1d4dc; color: #22ba7c; border-right: 2px solid #22ba7c; }
td { height: 42px; padding: 4px 4px 0; border: solid #c5cadd; border-width: 0 1px 1px 0; }
td.boxed { border-color: #000; font-size: 26px; }
td.num { text-align: right; font-size: 30px; }
td.mono { font-family: "Liberation Mono", monospace; font-size: 25px; }
td.flag { background: linear-gradient(135deg, #008000 4px, #fff 4px); }
td.active { position: relative; }
td.active::before { content: ""; position: absolute; inset: -3px -2px -2px -3px; border: 3px solid #22ba7c; }
td.active::after { content: ""; position: absolute; right: -4px; bottom: -4px; width: 5px; height: 5px; background: #22ba7c; outline: 1px solid #fff; }
.chart { position: absolute; }
.before { left: 432px; top: 71px; }
.chart.after { left: 1411px; top: 76px; margin: 0; }
.shaded { filter: drop-shadow(0 4px 3px rgba(0, 0, 0, .4)); }
.ttl { font: 700 45px Lato, sans-serif; }
.val { font: 32px "Open Sans", sans-serif; fill: #fff; }
.leg { font: 22px Lato, sans-serif; }
.note { position: absolute; margin: 0; color: #ff1c10; font-size: 42px; line-height: 60px; }
.first { left: 745px; top: 863px; }
.second { left: 1771px; top: 855px; }
.vside { display: flex; flex-direction: column; width: 34px; padding-left: 6px; }
.split { height: 6px; margin: 11px 4px; border: solid #8e99b3; border-width: 1px 0; }
.vscroll { display: flex; flex-direction: column; align-items: center; justify-content: space-between; flex: 1; padding: 15px 0; background: #e8eaef; }
.vscroll .thumb { flex: 1; width: 26px; margin: 19px 0 72px; background: #d4d7df; border-radius: 13px; }
.arr { background: #8b97b3; }
.up, .down { width: 12px; height: 7px; }
.up { clip-path: polygon(50% 0, 100% 100%, 0 100%); }
.down { clip-path: polygon(0 0, 100% 0, 50% 100%); }

/* sheet tabs */
.tabs { display: flex; align-items: center; height: 44px; flex: none; border-top: 1px solid #e2e4ea; }
.pager { display: flex; justify-content: space-between; width: 238px; padding: 0 33px 0 32px; color: #b0b3b9; }
.tab { height: 44px; padding: 0 31px; background: #e6e7ec; color: #424d66; }
.tab.brown { padding: 0 34px; background: #993300; color: #fff; }
.tab.on { padding: 0 30px; background: #fff; color: #22ba7c; font-weight: 700; }
.add { width: 46px; color: #36415a; }
.grip { width: 5px; height: 20px; border: solid #8e99b3; border-width: 0 1px; }
.grip.left { margin: 0 12px 0 auto; }
.grip.right { margin: 0 46px 0 11px; }
.hscroll { display: flex; align-items: center; width: 1080px; height: 28px; padding: 0 15px; background: #e8eaef; }
.hscroll .thumb { flex: 1; height: 26px; margin: 0 86px 0 19px; background: #d4d7df; border-radius: 13px; }
.lt, .rt { width: 7px; height: 12px; }
.lt { clip-path: polygon(100% 0, 100% 100%, 0 50%); }
.rt { clip-path: polygon(0 0, 100% 50%, 0 100%); }

/* side panel */
.side { display: flex; flex-direction: column; align-items: center; width: 91px; flex: none; padding-right: 2px; border-left: 5px solid #e4e6ec; }
.handle { width: 40px; height: 9px; margin: 21px 0 22px; border: solid #cdced2; border-width: 2px 0; }
.side .plain { height: 72px; }
.side .blue { color: #56617c; }
.side .dim { color: #97a0b0; }
.rule { width: 76px; height: 1px; background: #dfe1e6; }
.side .rule { margin-top: 24px; }
.side .help { margin-top: 26px; }
.side .rule.last { margin-top: auto; }
.side .dotsbtn { height: 98px; padding-top: 26px; color: #3b4560; }

/* status bar */
.status { position: relative; display: flex; align-items: center; height: 56px; flex: none; border-top: 2px solid #e2e4ea; }
.macro { width: 75px; }
.status .bar { height: 28px; }
.views { display: flex; align-items: center; margin-left: auto; padding-right: 31px; }
.views .cross { gap: 8px; margin: 0 16px 0 14px; }
.modes { display: flex; gap: 6px; margin: 0 12px; }
.modes .plain { width: 46px; height: 48px; }
.pct { gap: 8px; margin: 0 20px 0 14px; font-size: 26px; }
.zoom { appearance: none; width: 277px; height: 28px; margin: 0 21px 0 24px; }
.zoom + .plain { margin-right: 25px; }
.zoom::-webkit-slider-runnable-track { height: 3px; background: linear-gradient(90deg, #465069 49%, #d4d7df 49%); }
.zoom::-webkit-slider-thumb { appearance: none; width: 26px; height: 26px; margin-top: -12px; border: 2px solid #4c4c4c; border-radius: 50%; background: #ececec; }
.mark { position: absolute; right: 13px; bottom: 4px; color: #8c8c8c; font-size: 15px; line-height: 24px; text-shadow: 0 0 2px #fff; }
</style>
